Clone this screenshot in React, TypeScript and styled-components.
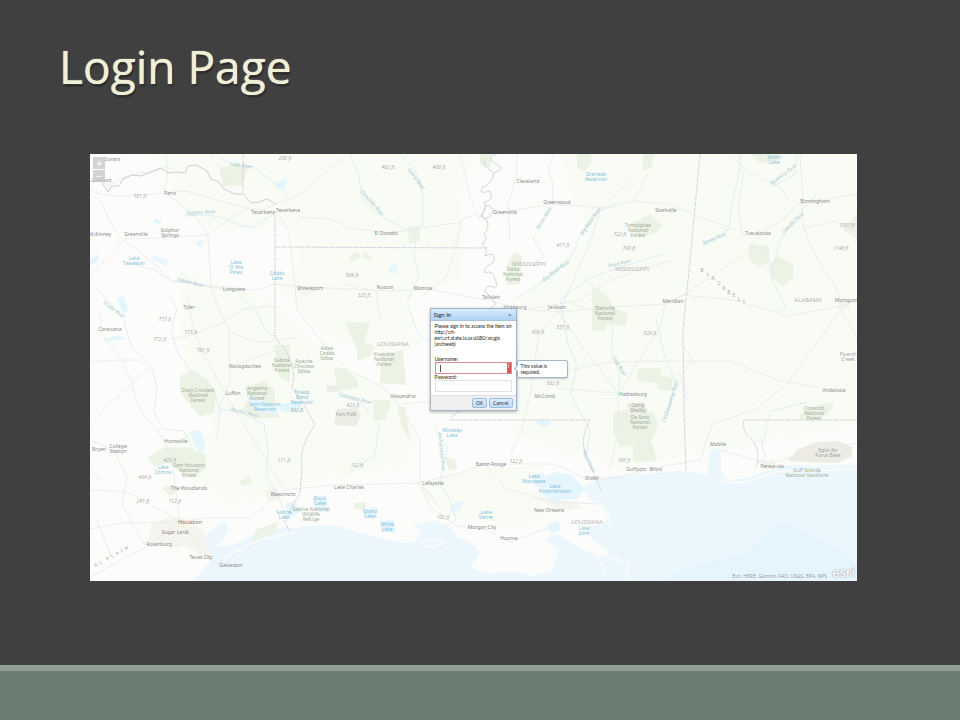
import React from "react";
import styled, { createGlobalStyle } from "styled-components";

const GlobalStyle = createGlobalStyle`
  * { box-sizing: border-box; }
  body { margin: 0; background: #404040; }
`;

const Slide = styled.main`
  min-height: 100vh;
  display: flex;
  flex-direction: column;
  background: #404040;
`;

const Title = styled.h1`
  margin: 0;
  padding: 34px 59px 0;
  font: 400 46px/64px "Open Sans", sans-serif;
  color: #f0f0d8;
  text-shadow: 0 0 1px #f0f0d8, 1px 2px 2px rgba(0, 0, 0, 0.5);
`;

const MapFrame = styled.section`
  position: relative;
  margin: 56px 103px 40px 90px;
  aspect-ratio: 767 / 427;
  background: #fcfdfb;
`;

const MapDrawing = styled.svg`
  display: block;
  width: 100%;
  height: 100%;
  font-family: "Noto Sans", sans-serif;
`;

const FooterBand = styled.footer`
  margin-top: auto;
  height: 55px;
  border-top: 6px solid #8e9f93;
  background: #6b7d72;
`;

const ZoomControl = styled.div`
  position: absolute;
  top: 3px;
  left: 3px;
  display: grid;
  gap: 1px;
`;

const ZoomButton = styled.button`
  width: 12px;
  height: 12px;
  padding: 0;
  border: 0;
  background: rgba(200, 200, 200, 0.8);
  color: #f8f8f8;
  font: 700 10px/12px "Open Sans", sans-serif;
`;

const Attribution = styled.div`
  position: absolute;
  right: 2px;
  bottom: 1px;
  display: flex;
  align-items: flex-end;
  gap: 5px;
  color: #909599;
  font: 400 5px/8px "Open Sans", sans-serif;
`;

const EsriMark = styled.span`
  color: #ffffff;
  font: 600 13px/15px "Open Sans", sans-serif;
  text-shadow: 0 0 1px #999, 0 0 2px #aaa;
`;

const SignIn = styled.form`
  position: absolute;
  top: 154px;
  left: 50%;
  width: 87px;
  margin-left: -44px;
  border: 1px solid #9db5cb;
  background: #ffffff;
  box-shadow: 0 1px 3px rgba(0, 0, 0, 0.3);
  color: #222222;
  font: 400 5px/6px Lato, sans-serif;
`;

const DialogHeader = styled.header`
  display: flex;
  justify-content: space-between;
  align-items: center;
  height: 12px;
  padding: 0 4px 0 3px;
  border-bottom: 1px solid #a9c4de;
  background: linear-gradient(#d9ebfc, #aed2f6);
`;

const DialogTitle = styled.h2`
  margin: 0;
  font: 400 6px/8px Lato, sans-serif;
`;

const CloseButton = styled.button`
  padding: 0;
  border: 0;
  background: none;
  color: #53789c;
  font: 700 6px/8px "Open Sans", sans-serif;
`;

const DialogBody = styled.div`
  padding: 2px 4px 3px;
`;

const Message = styled.p`
  margin: 0 0 9px;
  white-space: nowrap;
`;

const FieldLabel = styled.label`
  display: block;
  height: 6px;
`;

const FieldBox = styled.div<{ $invalid?: boolean }>`
  position: relative;
  display: flex;
  height: 12px;
  border: 1px solid ${(p) => (p.$invalid ? "#e58a8a" : "#e2e2e2")};
  background: #ffffff;
`;

const FieldInput = styled.input`
  min-width: 0;
  flex: 1;
  padding: 0 4px;
  border: 0;
  outline: 0;
  background: transparent;
  color: #222222;
  font: inherit;
`;

const Caret = styled.span`
  position: absolute;
  left: 4px;
  top: 2px;
  width: 1px;
  height: 7px;
  background: #555555;
`;

const ErrorFlag = styled.span`
  width: 4px;
  background: #d9575c;
  color: #ffffff;
  text-align: center;
  font-weight: 700;
`;

const DialogFooter = styled.div`
  display: flex;
  justify-content: flex-end;
  gap: 2px;
  padding: 2px 3px 2px 0;
  border-top: 1px solid #dddddd;
  background: #f0f0f0;
`;

const DialogButton = styled.button`
  height: 10px;
  padding: 0 3px;
  border: 1px solid #9fbddb;
  border-radius: 2px;
  background: linear-gradient(#dcecfb, #bfdcf8);
  color: #222222;
  font: 400 5px/8px "Open Sans", sans-serif;
`;

const Tooltip = styled.div`
  position: absolute;
  top: 51px;
  left: 86px;
  width: 51px;
  padding: 2px 3px;
  border: 1px solid #a3b7c9;
  border-radius: 2px;
  background: #ffffff;
  box-shadow: 0 1px 2px rgba(0, 0, 0, 0.2);

  &::before {
    content: "";
    position: absolute;
    left: -3px;
    top: 5px;
    width: 4px;
    height: 4px;
    border: solid #a3b7c9;
    border-width: 0 0 1px 1px;
    background: #ffffff;
    transform: rotate(45deg);
  }
`;

type Kind = "city" | "metro" | "water" | "park" | "peak" | "state" | "river" | "area";

const labelStyle: Record<Kind, { fill: string; size: number; italic?: boolean }> = {
  city: { fill: "#8b8b8b", size: 5 },
  metro: { fill: "#7c7c7c", size: 6 },
  water: { fill: "#82c2da", size: 5 },
  park: { fill: "#9dae99", size: 5 },
  peak: { fill: "#adadad", size: 5, italic: true },
  state: { fill: "#b9b3bb", size: 6 },
  river: { fill: "#a3cad0", size: 5, italic: true },
  area: { fill: "#a3a39e", size: 5 },
};

// kind, centre x, first baseline, lines separated by "|", rotation
const labels: [Kind, number, number, string, number?][] = [
  ["city", 112, 161, "Durant"], ["city", 102, 182, "Denison"], ["city", 170, 195, "Paris"],
  ["city", 100, 236, "McKinney"], ["city", 136, 236, "Greenville"], ["city", 170, 232, "Sulphur|Springs"],
  ["city", 263, 214, "Texarkana"], ["city", 288, 212, "Texarkana"], ["city", 234, 291, "Longview"],
  ["city", 189, 309, "Tyler"], ["city", 110, 331, "Corsicana"], ["city", 245, 368, "Nacogdoches"],
  ["city", 233, 395, "Lufkin"], ["city", 176, 443, "Huntsville"], ["city", 99, 451, "Bryan"],
  ["city", 118, 448, "College|Station"], ["city", 189, 490, "The Woodlands"], ["metro", 190, 524, "Houston"],
  ["city", 175, 534, "Sugar Land"], ["city", 159, 546, "Rosenburg"], ["city", 201, 559, "Texas City"],
  ["city", 231, 567, "Galveston"], ["city", 283, 496, "Beaumont"], ["city", 349, 489, "Lake Charles"],
  ["city", 433, 485, "Lafayette"], ["city", 491, 466, "Baton Rouge"], ["city", 482, 529, "Morgan City"],
  ["city", 509, 540, "Houma"], ["city", 549, 512, "New Orleans"], ["city", 592, 480, "Slidell"],
  ["city", 636, 471, "Gulfport"], ["city", 656, 471, "Biloxi"], ["city", 718, 446, "Mobile"],
  ["city", 772, 468, "Pensacola"], ["city", 633, 396, "Hattiesburg"], ["city", 673, 303, "Meridian"],
  ["city", 834, 392, "Andalusia"], ["city", 850, 302, "Montgomery"], ["city", 815, 203, "Birmingham"],
  ["city", 758, 235, "Tuscaloosa"], ["city", 666, 212, "Starkville"], ["city", 557, 204, "Greenwood"],
  ["city", 528, 183, "Cleveland"], ["city", 505, 214, "Greenville"], ["city", 491, 299, "Tallulah"],
  ["city", 515, 309, "Vicksburg"], ["city", 557, 309, "Jackson"], ["city", 545, 398, "McComb"],
  ["city", 386, 235, "El Dorado"], ["city", 310, 290, "Shreveport"], ["city", 385, 289, "Ruston"],
  ["city", 423, 290, "Monroe"], ["city", 403, 398, "Alexandria"],
  ["water", 134, 260, "Lake|Tawakoni"], ["water", 236, 264, "Lake|O' the|Pines"], ["water", 277, 275, "Caddo|Lake"],
  ["water", 596, 176, "Grenada|Reservoir"], ["water", 774, 159, "Smith|Lake"], ["water", 163, 469, "Lake|Conroe"],
  ["water", 265, 406, "Sam Rayburn|Reservoir"], ["water", 302, 394, "Toledo|Bend|Reservoir"],
  ["water", 320, 500, "Black|Lake"], ["water", 284, 514, "Sabine|Lake"], ["water", 370, 513, "Grand|Lake"],
  ["water", 387, 526, "White|Lake"], ["water", 486, 514, "Lake|Verret"], ["water", 452, 432, "Moseley|Lake"],
  ["water", 534, 478, "Lake|Maurepas"], ["water", 555, 488, "Lake|Pontchartrain"], ["water", 584, 530, "Lake|John"],
  ["park", 198, 392, "Davy Crockett|National|Forest"], ["park", 257, 390, "Angelina|National|Forest"],
  ["park", 189, 467, "Sam Houston|National|Forest"], ["park", 311, 511, "Sabine National|Wildlife|Refuge"],
  ["park", 282, 362, "Sabine|National|Forest"], ["park", 384, 356, "Kisatchie|National|Forest"],
  ["park", 327, 350, "Adais|Caddo|Sdtsa"], ["park", 304, 363, "Apache|Choctaw|Sdtsa"],
  ["park", 513, 271, "Delta|National|Forest"], ["park", 638, 227, "Tombigbee|National|Forest"],
  ["park", 605, 310, "Bienville|National|Forest"], ["park", 640, 419, "De Soto|National|Forest"],
  ["park", 814, 410, "Conecuh|National|Forest"], ["park", 807, 472, "Gulf Islands|National Seashore"],
  ["area", 828, 452, "Eglin Air|Force Base"], ["area", 638, 407, "Camp|Shelby"], ["area", 346, 416, "Fort Polk"],
  ["area", 848, 356, "Poarch|Creek"],
  ["state", 393, 346, "LOUISIANA"], ["state", 587, 524, "LOUISIANA"], ["state", 529, 266, "MISSISSIPPI"],
  ["state", 632, 271, "MISSISSIPPI"], ["state", 808, 302, "ALABAMA"],
  ["peak", 140, 198, "701 ft"], ["peak", 285, 160, "230 ft"], ["peak", 388, 169, "402 ft"], ["peak", 439, 169, "400 ft"],
  ["peak", 352, 277, "504 ft"], ["peak", 364, 297, "323 ft"], ["peak", 165, 321, "773 ft"], ["peak", 160, 341, "772 ft"],
  ["peak", 191, 334, "715 ft"], ["peak", 203, 352, "761 ft"], ["peak", 563, 247, "417 ft"], ["peak", 620, 236, "722 ft"],
  ["peak", 629, 250, "700 ft"], ["peak", 847, 227, "1507 ft"], ["peak", 841, 250, "1148 ft"], ["peak", 650, 335, "529 ft"],
  ["peak", 170, 462, "425 ft"], ["peak", 145, 479, "404 ft"], ["peak", 143, 503, "241 ft"], ["peak", 175, 503, "112 ft"],
  ["peak", 284, 462, "111 ft"], ["peak", 357, 467, "122 ft"], ["peak", 516, 463, "122 ft"], ["peak", 443, 519, "102 ft"],
  ["peak", 297, 412, "502 ft"], ["peak", 353, 407, "423 ft"], ["peak", 538, 334, "450 ft"], ["peak", 563, 329, "531 ft"],
  ["peak", 553, 385, "502 ft"], ["peak", 624, 462, "160 ft"],
  ["river", 201, 214, "Sulphur River", -3], ["river", 241, 167, "Little River", 8], ["river", 190, 284, "Sabine River", 14],
  ["river", 113, 311, "Trinity River", 35], ["river", 244, 414, "Neches River", 14], ["river", 371, 204, "Ouachita River", 49],
  ["river", 415, 180, "Saline River", 53], ["river", 355, 400, "Calcasieu River", 15], ["river", 440, 452, "Atchafalaya River", 84],
  ["river", 545, 219, "Yazoo River", -58], ["river", 592, 222, "Big Black River", -55], ["river", 557, 272, "Big Black River", -36],
  ["river", 620, 265, "Pearl River", -14], ["river", 715, 240, "Sipsey River", -22], ["river", 784, 176, "Mulberry Fork", -38],
  ["river", 794, 224, "Cahaba River", -44], ["river", 672, 402, "Chickasawhay River", -72], ["river", 618, 367, "Leaf River", 60],
  ["river", 587, 462, "Pearl River", 65],
];

const roads = [
  "M90 191Q108 197 128 196L165 193L185 191L235 205L259 211L300 194L343 158",
  "M90 195Q103 198 107 216Q119 240 137 250Q158 266 171 281L220 287L256 290L275 284L310 287L390 291L428 289L491 301L520 309L558 312L605 307L665 304L687 293L742 256L763 232L786 217L797 204L857 194",
  "M90 275Q103 264 124 239L164 238L208 235L211 287L219 309L229 331L230 380L220 407L217 440",
  "M164 192L168 172L166 154M165 193L180 204Q200 220 208 235L230 218L249 208L276 212L289 230L295 287L297 310L320 340L350 371L383 387L403 410L420 440L420 482",
  "M99 309L102 335L119 356L131 379Q137 414 157 430Q171 451 173 468L179 517",
  "M90 362L118 360L142 360M90 426L110 403L125 390L150 367M90 490Q125 490 135 496L168 514L179 522L205 518L251 518L275 496L285 490L330 485L380 484L418 483L456 474L485 464L553 464L584 477L615 478",
  "M90 529L122 523L179 522L148 546L90 577M179 522L193 538L211 561L229 567",
  "M171 339L188 336L220 324L243 309L275 306M188 300L192 323L202 351L219 382L239 417L285 490",
  "M229 331Q260 347 275 340L297 338M236 365L275 350M211 154L234 190M420 298L447 276Q456 248 462 219L475 215",
  "M300 217L330 219L350 228L390 233L461 222M345 284L376 291L380 320M460 154L471 200L480 220M403 404L450 400L485 407L517 408",
  "M517 154L516 178L508 205L510 242M506 212L551 204L608 208L634 201L647 175M634 201L667 204L735 230M560 310L575 277L590 242L600 211L635 177",
  "M560 309L539 333L531 390L522 430L510 455M558 312L585 350L617 392L620 428L609 470M570 303L595 312M620 392L636 365L660 329L665 303",
  "M570 370L611 362L666 361L730 361L780 381L822 388M688 403L680 375L693 361L681 343",
  "M743 236L738 210L743 175L739 154M800 154L803 202L802 222L813 251L835 286L843 306L818 341L787 384L757 408L712 425L700 460L665 466L635 473L600 481",
  "M720 450L755 460L770 464L815 449L857 443M840 307L857 338M803 228L835 221L857 238M843 306L857 301",
  "M682 295L734 300L787 316L843 306M731 155L748 172L779 186L790 201M530 309L580 300L613 279L672 260",
  "M485 465L505 488L535 497L556 502L600 504M420 484L430 507L457 526L487 530L510 542L548 528M557 388L600 392L617 392",
];

const rivers = [
  "M90 181L96 181L101 177L107 186L116 182L123 177L135 175L142 172L150 174L158 170L166 166L174 170",
  "M184 216L207 215L224 218L239 225L254 228L265 219L275 214",
  "M220 158L238 167L252 166L262 174L275 183L288 195",
  "M135 265L155 270L171 281L190 282L208 287L235 290L256 310L266 331L277 337",
  "M99 291L116 311L124 320L131 346L152 367L157 389L154 412L164 429L184 431L193 449",
  "M167 293L177 309L171 331L178 354L191 371L213 389L219 408L243 414L264 424L268 450L266 475L279 498L288 522",
  "M350 154L359 177L362 197L374 212L396 224L405 229L423 225L423 195L415 170L400 154",
  "M416 230L414 256L419 275L407 303L418 334L445 352L464 371L475 395",
  "M554 154L548 169L553 184L552 207L543 222L533 238L544 257L534 263",
  "M619 202L595 213L582 233L571 257L547 279L515 299",
  "M662 254L618 268L590 278L560 300L568 344L577 366L570 394L590 430L586 460",
  "M613 317L612 355L620 373L618 397M656 318L665 359L675 379L670 406L660 420L651 424",
  "M741 154L738 178L731 209L729 229L704 245M797 154L794 175L774 186",
  "M816 196L793 219L779 244L771 277L786 307L778 314M764 246L775 276",
  "M93 441L115 452L127 477L122 503L137 532L145 545M97 520L111 557",
  "M340 396L360 402L379 424L375 454L348 474M434 427L447 446L440 484L450 500L456 520L440 530",
  "M760 437L765 456L756 466M90 470L100 480M808 402L770 411L762 447",
];

const parks = [
  "M219 168L238 164L248 168L242 186L223 186Z", "M180 376L192 370L207 379L216 392L214 412L200 417L188 403L180 392Z",
  "M247 388L263 380L275 391L275 410L280 417L255 419L242 409L248 400Z", "M274 345L290 345L290 382L279 377Z",
  "M148 457L163 448L188 447L206 455L206 469L192 478L180 472L169 463L154 466Z", "M162 488L175 484L180 490L170 496Z",
  "M345 322L370 323L364 342L375 347L370 356L357 361L357 350Z", "M381 355L403 350L406 385L380 383Z",
  "M334 367L345 368L358 380L358 388L337 391Z", "M373 399L391 401L385 420L374 420Z",
  "M351 255L357 252L361 258L349 262Z", "M364 252L372 257L370 261L363 257Z", "M408 229L419 227L420 241L409 244Z",
  "M480 154L492 154L490 168L480 165Z", "M514 253L522 256L520 284L507 285L508 262Z",
  "M577 154L591 154L591 163L584 171L577 167Z", "M643 154L655 154L651 168L643 171Z",
  "M630 224L650 214L663 226L656 233L638 237Z", "M592 286L606 294L614 308L627 313L626 326L606 324L605 331L592 331Z",
  "M638 368L660 368L661 375L673 378L671 391L659 390L657 383L638 381Z",
  "M613 413L632 408L654 413L658 427L651 440L657 460L633 462L633 445L620 447L613 430Z",
  "M749 244L769 246L769 263L759 266L749 261Z", "M768 267L778 256L793 264L793 278L783 286L771 277Z",
  "M800 414L814 406L834 402L829 413L818 419L800 420Z", "M751 154L778 154L778 161L760 163Z",
  "M843 230L857 214L857 237Z", "M355 503L366 502L365 510L353 509Z", "M238 483L250 476L252 483L243 486Z",
  "M257 529L277 522L276 532L251 542Z", "M445 457L455 459L457 468L449 471Z", "M410 441L401 425L397 406L405 407Z",
];

const lakes = [
  "M90 259L99 254L98 261L90 266Z", "M154 219L162 220L160 225L154 223Z", "M152 255L168 260L166 266L153 260Z",
  "M196 241L204 240L202 247L197 246Z", "M275 183L287 179L285 189L277 188Z", "M117 299L123 296L129 309L124 314L119 305Z",
  "M102 340L118 335L127 339L112 341Z", "M190 431L200 430L205 442L203 454L194 445Z",
  "M245 386L251 397L266 401L278 408L279 414L262 413L249 403Z", "M275 405L300 401L303 412L284 412Z",
  "M389 267L397 264L397 273L390 273Z", "M454 503L463 501L461 510L449 512Z",
  "M532 477L542 472L548 480L540 488L533 484Z", "M541 478L555 472L571 475L585 488L577 499L552 501L541 492Z",
  "M546 525L558 521L562 529L552 534Z", "M285 504L293 501L302 511L289 518Z", "M312 499L327 499L329 512L316 511Z",
  "M364 510L375 507L377 518L364 517Z", "M382 522L394 519L396 532L382 533Z", "M534 423L542 418L553 423L544 427Z",
];

const boundaries = [
  "M243 154L243 193M275 215L275 338Q299 362 292 387L306 408L315 425Q299 446 302 468L300 493L284 521L290 532",
  "M275 247L488 248", "M700 154L692 240L683 330L684 410L686 472",
  "M450 420L590 420Q577 442 590 464L601 490", "M857 420L744 420Q741 431 751 438Q762 452 756 467",
];

const meander =
  "M497 154Q485 158 495 163Q507 169 494 173Q480 165 486 158M494 173Q492 184 483 187Q477 195 490 191Q495 201 484 202Q488 210 480 216Q490 222 493 210Q488 201 484 209Q480 219 487 220Q490 228 484 234Q489 240 482 243Q490 252 484 256Q498 250 493 263Q483 267 485 273Q493 269 495 280Q501 290 489 286Q480 291 490 296L496 304L480 318L487 330L474 349L470 370L462 382L472 402L451 417";

const blackBelt: [string, number, number][] = [
  ["B", 702, 272], ["L", 708, 276], ["A", 713, 280], ["C", 719, 285], ["K", 724, 290],
  ["B", 729, 294], ["E", 734, 297], ["L", 739, 301], ["T", 744, 304],
];

const MapLabel = ({ item }: { item: (typeof labels)[number] }) => {
  const [kind, x, y, text, angle = 0] = item;
  const style = labelStyle[kind];
  return (
    <text
      fill={style.fill}
      fontSize={style.size}
      fontStyle={style.italic ? "italic" : "normal"}
      textAnchor="middle"
      transform={`rotate(${angle} ${x} ${y})`}
    >
      {text.split("|").map((line, i) => (
        <tspan key={line} x={x} y={y + i * 5}>{line}</tspan>
      ))}
    </text>
  );
};

const GulfMap = () => (
  <MapDrawing viewBox="90 154 767 427" role="img" aria-label="Map of the Gulf Coast">
    <rect x="90" y="154" width="767" height="427" fill="#fcfdfa" />
    <g fill="#f9fbf5">
      <path d="M155 154L470 154L461 210L462 280L403 300L420 345L400 355L330 340L280 290L300 260L289 225L210 230L180 205Z" />
      <path d="M180 270L270 300L330 360L405 400L415 440L400 470L290 485L230 510L190 470L165 440L215 430L185 370Z" />
      <path d="M557 154L857 154L857 425L735 448L610 470L590 450L570 455L515 430L520 300L590 235Z" />
      <path d="M423 480L475 470L545 464L535 491L570 505L520 527L450 515Z" />
    </g>
    <g fill="#f5f4ef">
      <path d="M151 524L170 516L185 518L202 530L215 553L206 560L187 546L173 548L148 542Z" />
      <path d="M265 491L276 487L281 500L268 501ZM300 286L315 289L308 296L297 292ZM414 480L426 487L443 510L431 501Z" />
      <path d="M535 499L570 501L584 508L565 511ZM760 460L775 459L773 469L763 469ZM836 303L850 300L849 309L838 309Z" />
    </g>
    <path
      fill="#ebf7fd"
      d="M192 581L204 569L212 558L205 543L208 534L217 526L224 520L229 528L222 541L215 547L233 545L252 535L276 529L292 528L318 525L337 526L365 534L395 542L413 543L421 532L413 525L435 520L451 528L457 537L470 542L480 553L470 567L487 574L512 571L535 576L553 569L558 552L545 539L557 534L573 544L590 553L598 559L610 551L598 543L584 532L589 525L602 525L610 515L603 505L591 499L582 489L595 480L614 476L632 475L655 473L677 471L700 473L708 477L709 454L714 447L721 452L721 471L729 480L747 478L766 471L787 465L815 466L857 464L857 581Z"
    />
    <path fill="#e5f5fe" d="M660 581L690 567L742 554L766 536L781 521L814 536L857 562L857 581Z" />
    <g fill="none" stroke="#fafbf8" strokeWidth="2">
      <path d="M222 559L255 541L300 531M420 544L428 538L444 542L435 548L425 546M590 510L607 513L610 525M583 548L597 554L605 572M718 481L745 483L775 472L857 469" />
      <path d="M497 548L510 564L520 555L527 572M555 545L548 565M603 555L629 563L625 579" />
    </g>
    <g fill="#ecf2e4">{parks.map((d) => <path key={d} d={d} />)}</g>
    <g fill="#ecebe4">
      <path d="M788 461L797 450L816 442L838 441L852 447L852 456L838 463L805 462Z" />
      <path d="M337 409L357 408L361 416L356 426L334 425ZM626 404L643 402L648 412L632 414ZM327 385L340 386L338 392L327 392Z" />
    </g>
    <g fill="#e4f5fc">{lakes.map((d) => <path key={d} d={d} />)}</g>
    <g fill="none" stroke="#eeeced">{roads.map((d) => <path key={d} d={d} />)}</g>
    <g fill="none" stroke="#e0eff2">{rivers.map((d) => <path key={d} d={d} />)}</g>
    <path fill="none" stroke="#d6d4dc" d={meander} />
    <g fill="none" stroke="#dad3dd" strokeDasharray="5 1">{boundaries.map((d) => <path key={d} d={d} />)}</g>
    <path
      fill="none"
      stroke="#d5cbd8"
      d="M90 181L95 182L99 177L104 186L108 192L111 186L119 186L123 179L132 175L141 176L150 172L161 168L168 173L177 172L185 173L188 166L196 165L207 171L211 179L219 182L224 189L235 194L243 194L251 203L259 202L267 199L276 204"
    />
    <g fill="#a9a9a9" fontSize="5" textAnchor="middle">
      {blackBelt.map(([letter, x, y]) => <text key={x} x={x} y={y}>{letter}</text>)}
      <text transform="rotate(-29 112 558)" x="112" y="558" xmlSpace="preserve">A  L    P  L  A  I  N</text>
    </g>
    {labels.map((item) => <MapLabel key={item.slice(0, 4).join()} item={item} />)}
  </MapDrawing>
);

export default function App() {
  return (
    <Slide>
      <GlobalStyle />
      <Title>Login Page</Title>
      <MapFrame>
        <GulfMap />
        <ZoomControl>
          <ZoomButton aria-label="Zoom in">+</ZoomButton>
          <ZoomButton aria-label="Zoom out">−</ZoomButton>
        </ZoomControl>
        <SignIn role="dialog" aria-labelledby="sign-in-title" onSubmit={(e) => e.preventDefault()}>
          <DialogHeader>
            <DialogTitle id="sign-in-title">Sign In</DialogTitle>
            <CloseButton type="button" aria-label="Close">×</CloseButton>
          </DialogHeader>
          <DialogBody>
            <Message>
              Please sign in to access the item on<br />
              http://crt-<br />
              esri.crt.state.la.us:6080/arcgis<br />
              (archweb)
            </Message>
            <FieldLabel htmlFor="username">Username:</FieldLabel>
            <FieldBox $invalid>
              <FieldInput id="username" type="text" aria-invalid="true" aria-describedby="username-error" />
              <Caret />
              <ErrorFlag aria-hidden="true">!</ErrorFlag>
            </FieldBox>
            <FieldLabel htmlFor="password">Password:</FieldLabel>
            <FieldBox>
              <FieldInput id="password" type="password" />
            </FieldBox>
          </DialogBody>
          <DialogFooter>
            <DialogButton type="submit">OK</DialogButton>
            <DialogButton type="button">Cancel</DialogButton>
          </DialogFooter>
          <Tooltip id="username-error" role="tooltip">This value is<br />required.</Tooltip>
        </SignIn>
        <Attribution>
          <span>Esri, HERE, Garmin, FAO, USGS, EPA, NPS</span>
          <EsriMark>esri</EsriMark>
        </Attribution>
      </MapFrame>
      <FooterBand />
    </Slide>
  );
}
